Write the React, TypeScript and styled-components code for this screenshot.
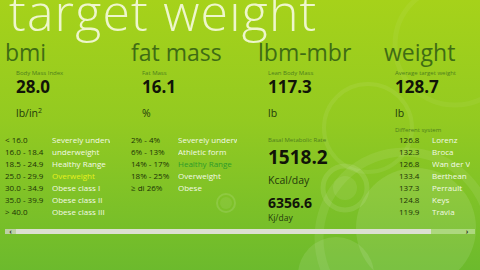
import React from "react";
import styled, { createGlobalStyle } from "styled-components";

const Global = createGlobalStyle`
  html, body { margin: 0; padding: 0; width: 480px; height: 270px; overflow: hidden; }
  body { font-family: "Open Sans", "Noto Sans", "DejaVu Sans", sans-serif; }
`;

const Page = styled.div`
  position: relative;
  width: 480px;
  height: 270px;
  overflow: hidden;
  background: linear-gradient(180deg, #a6d21a 0%, #93ca21 45%, #6cba2d 100%);
`;

const Decor = styled.svg`
  position: absolute;
  left: 0;
  top: 0;
  width: 480px;
  height: 270px;
  pointer-events: none;
`;

const Content = styled.div`
  position: relative;
  z-index: 1;
  display: flex;
  flex-direction: column;
  height: 100%;
`;

const Title = styled.h1`
  margin: -13px 0 0 9px;
  font-size: 50px;
  line-height: 50px;
  font-weight: 300;
  letter-spacing: 1.2px;
  color: #eef6cc;
  white-space: nowrap;
`;

const Columns = styled.div`
  flex: 1;
  display: grid;
  grid-template-columns: 126px 127px 126px 1fr;
  padding-left: 5px;
  margin-top: 4px;
  min-height: 0;
`;

const Column = styled.section`
  display: flex;
  flex-direction: column;
  min-width: 0;
`;

const Heading = styled.h2`
  margin: 0;
  font-size: 23px;
  line-height: 23px;
  font-weight: 400;
  color: #3f6c14;
  white-space: nowrap;
`;

const Body = styled.div<{ $indent?: number }>`
  display: flex;
  flex-direction: column;
  padding-left: ${(p) => p.$indent ?? 11}px;
`;

const SubLabel = styled.div<{ $top?: number }>`
  margin-top: ${(p) => p.$top ?? 5}px;
  font-size: 6px;
  line-height: 8px;
  color: #4e7f1c;
  white-space: nowrap;
`;

const Value = styled.div<{ $size: number; $line: number; $top?: number }>`
  margin-top: ${(p) => p.$top ?? 0}px;
  font-size: ${(p) => p.$size}px;
  line-height: ${(p) => p.$line}px;
  font-weight: 700;
  color: #111408;
`;

const Unit = styled.div<{ $size?: number; $line?: number; $top?: number }>`
  margin-top: ${(p) => p.$top ?? 9}px;
  font-size: ${(p) => p.$size ?? 10.5}px;
  line-height: ${(p) => p.$line ?? 14}px;
  color: #233a0b;
  white-space: nowrap;
`;

const Sup = styled.sup`
  font-size: 7px;
  line-height: 0;
`;

const Table = styled.div<{ $cols: string; $top?: number; $indent?: number }>`
  display: grid;
  grid-template-columns: ${(p) => p.$cols};
  margin-top: ${(p) => p.$top ?? 0}px;
  padding-left: ${(p) => p.$indent ?? 0}px;
  font-size: 8px;
  line-height: 12px;
`;

const Range = styled.div`
  color: #1c3305;
  white-space: nowrap;
`;

type Tone = "white" | "yellow" | "green";
const toneColor: Record<Tone, string> = {
  white: "#f3f9e6",
  yellow: "#e6f11c",
  green: "#2e9a2a",
};

const Label = styled.div<{ $tone?: Tone }>`
  color: ${(p) => toneColor[p.$tone ?? "white"]};
  white-space: nowrap;
  overflow: hidden;
`;

const Scrollbar = styled.div`
  display: flex;
  height: 5px;
  margin: 0 5px 36px;
  background: rgba(232, 242, 214, 0.42);
`;

const Arrow = styled.div<{ $w: number }>`
  width: ${(p) => p.$w}px;
  font-size: 7px;
  line-height: 5px;
  font-weight: 700;
  text-align: center;
  color: #2d3322;
  background: ${(p) => (p.$w < 14 ? "rgba(200,206,188,0.7)" : "transparent")};
`;

const Thumb = styled.div`
  width: 415px;
  background: #dcdfd2;
`;

const Spacer = styled.div`
  flex: 1;
`;

const bmiRows: [string, string, Tone][] = [
  ["< 16.0", "Severely underweight", "white"],
  ["16.0 - 18.4", "underweight", "white"],
  ["18.5 - 24.9", "Healthy Range", "white"],
  ["25.0 - 29.9", "Overweight", "yellow"],
  ["30.0 - 34.9", "Obese class I", "white"],
  ["35.0 - 39.9", "Obese class II", "white"],
  ["> 40.0", "Obese class III", "white"],
];

const fatRows: [string, string, Tone][] = [
  ["2% - 4%", "Severely underweight", "white"],
  ["6% - 13%", "Athletic form", "white"],
  ["14% - 17%", "Healthy Range", "green"],
  ["18% - 25%", "Overweight", "white"],
  ["\u2265 di 26%", "Obese", "white"],
];

const weightRows: [string, string][] = [
  ["126.8", "Lorenz"],
  ["132.3", "Broca"],
  ["126.8", "Wan der Vael"],
  ["133.4", "Berthean"],
  ["137.3", "Perrault"],
  ["124.8", "Keys"],
  ["119.9", "Travia"],
];

const Decoration = () => (
  <Decor viewBox="0 0 480 270">
    <g fill="none" stroke="#ffffff">
      <circle cx="405" cy="238" r="86" strokeWidth="9" strokeOpacity="0.08" />
      <circle cx="368" cy="128" r="44" strokeWidth="4" strokeOpacity="0.07" />
      <circle cx="345" cy="188" r="22" strokeWidth="5" strokeOpacity="0.1" />
      <circle cx="226" cy="203" r="9" strokeWidth="2" strokeOpacity="0.12" />
      <circle cx="455" cy="45" r="60" strokeWidth="5" strokeOpacity="0.05" />
    </g>
    <g fill="#ffffff">
      <circle cx="416" cy="228" r="60" fillOpacity="0.1" />
      <circle cx="345" cy="188" r="12" fillOpacity="0.08" />
      <circle cx="336" cy="275" r="38" fillOpacity="0.1" />
      <circle cx="226" cy="203" r="6" fillOpacity="0.07" />
    </g>
  </Decor>
);

export default function App() {
  return (
    <>
      <Global />
      <Page>
        <Decoration />
        <Content>
          <Title>target weight</Title>
          <Columns>
            <Column>
              <Heading>bmi</Heading>
              <Body>
                <SubLabel>Body Mass Index</SubLabel>
                <Value $size={17} $line={20}>28.0</Value>
                <Unit>
                  lb/in<Sup>2</Sup>
                </Unit>
              </Body>
              <Table $cols="47px 58px" $top={14}>
                {bmiRows.map(([r, l, t]) => (
                  <React.Fragment key={r}>
                    <Range>{r}</Range>
                    <Label $tone={t}>{l}</Label>
                  </React.Fragment>
                ))}
              </Table>
            </Column>
            <Column>
              <Heading>fat mass</Heading>
              <Body>
                <SubLabel>Fat Mass</SubLabel>
                <Value $size={17} $line={20}>16.1</Value>
                <Unit>%</Unit>
              </Body>
              <Table $cols="47px 59px" $top={14}>
                {fatRows.map(([r, l, t]) => (
                  <React.Fragment key={r}>
                    <Range>{r}</Range>
                    <Label $tone={t}>{l}</Label>
                  </React.Fragment>
                ))}
              </Table>
            </Column>
            <Column>
              <Heading>lbm-mbr</Heading>
              <Body $indent={10}>
                <SubLabel>Lean Body Mass</SubLabel>
                <Value $size={17} $line={20}>117.3</Value>
                <Unit>lb</Unit>
                <SubLabel $top={16}>Basal Metabolic Rate</SubLabel>
                <Value $size={19} $line={22} $top={2}>1518.2</Value>
                <Unit $top={5}>Kcal/day</Unit>
                <Value $size={14} $line={18} $top={7}>6356.6</Value>
                <Unit $size={8.5} $line={12} $top={0}>Kj/day</Unit>
              </Body>
            </Column>
            <Column>
              <Heading>weight</Heading>
              <Body>
                <SubLabel>Average target weight</SubLabel>
                <Value $size={17} $line={20}>128.7</Value>
                <Unit>lb</Unit>
                <SubLabel $top={6}>Different system</SubLabel>
                <Table $cols="33px 38px" $indent={4}>
                  {weightRows.map(([n, l]) => (
                    <React.Fragment key={l}>
                      <Range>{n}</Range>
                      <Label>{l}</Label>
                    </React.Fragment>
                  ))}
                </Table>
              </Body>
            </Column>
          </Columns>
          <Scrollbar>
            <Arrow $w={11}>&lsaquo;</Arrow>
            <Thumb />
            <Spacer />
            <Arrow $w={16}>&rsaquo;</Arrow>
          </Scrollbar>
        </Content>
      </Page>
    </>
  );
}
